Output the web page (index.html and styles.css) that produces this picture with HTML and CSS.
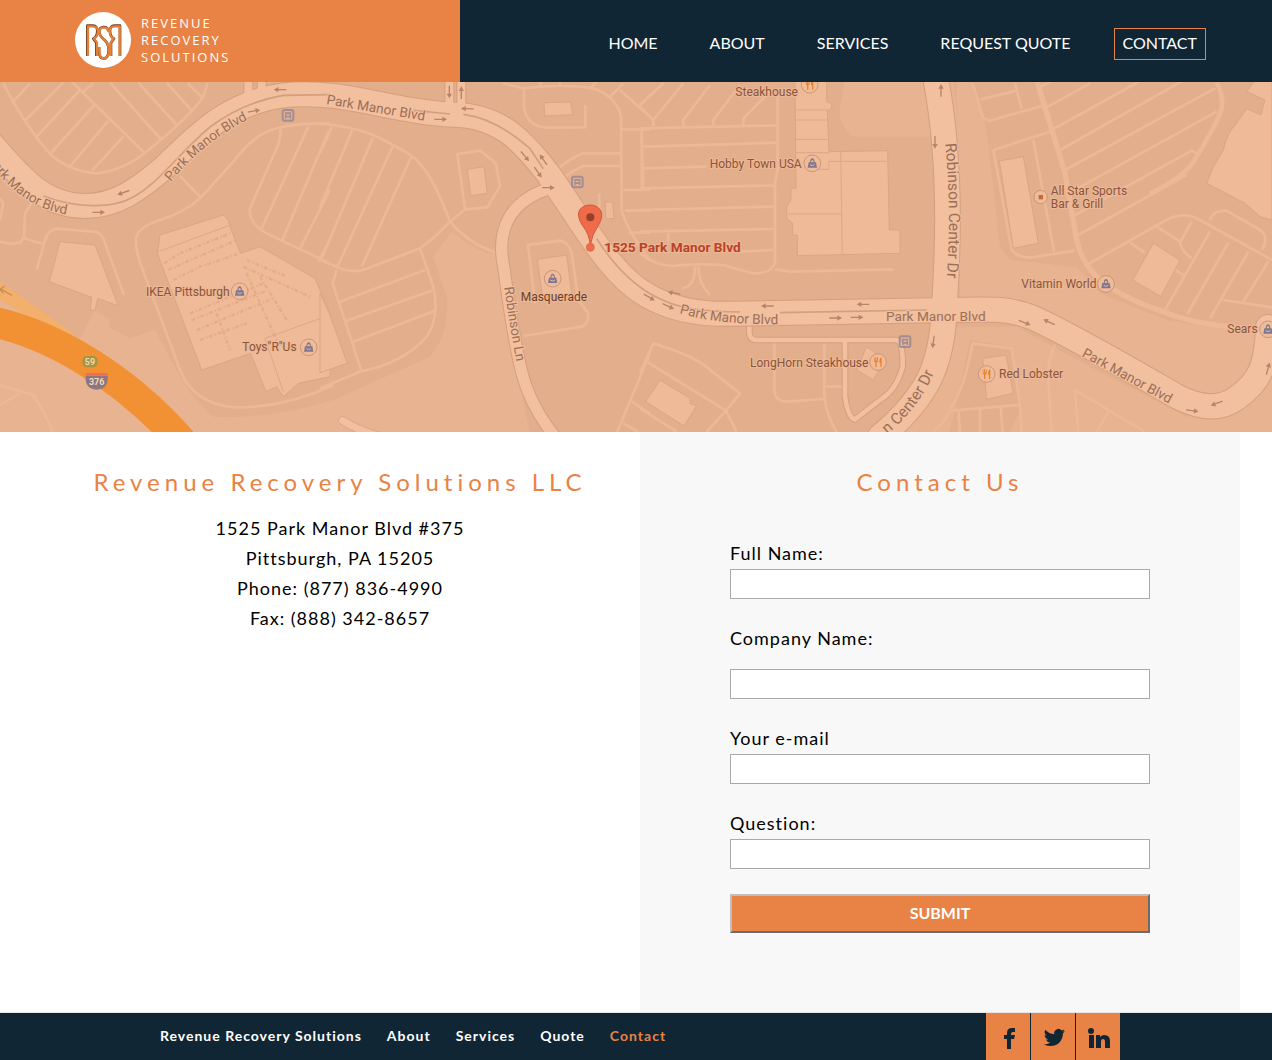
FILE: index.html
```html
<!DOCTYPE html>
<html lang="en">
<head>
<meta charset="utf-8">
<meta name="viewport" content="width=device-width, initial-scale=1">
<title>Contact | Revenue Recovery Solutions</title>
<link rel="stylesheet" href="styles.css">
</head>
<body>
<header class="site-header">
  <a class="brand" href="#">
    <svg class="brand-mark" viewBox="0 0 168 168" aria-hidden="true">
      <circle cx="84" cy="84" r="84" fill="#fff"/>
      <g fill="none" stroke="#6b4029" stroke-width="8" stroke-linejoin="round">
        <path d="M37 132V41H54Q67 42 67 57Q67 73 55 80L64 92V132"/>
        <path d="M135 132V41H118Q105 42 105 57Q105 73 117 80L108 92V132"/>
        <path d="M100 58Q100 45 86 45Q73 45 73 59Q73 71 86 82Q101 94 101 113Q101 139 86 139Q72 139 72 116V106"/>
      </g>
      <g fill="none" stroke="#e58038" stroke-width="7" stroke-linejoin="round">
        <path d="M39 132V43H54Q69 44 69 58Q69 74 57 80L66 92V132"/>
        <path d="M134 132V43H118Q104 44 104 58Q104 74 116 80L107 92V132"/>
        <path d="M101 59Q101 47 86 47Q73 47 73 60Q73 72 86 82Q102 94 102 113Q102 139 86 139Q73 139 73 116V106"/>
      </g>
    </svg>
    <span class="brand-name">REVENUE<br>RECOVERY<br>SOLUTIONS</span>
  </a>
  <nav class="main-nav" aria-label="Main">
    <a href="#">HOME</a>
    <a href="#">ABOUT</a>
    <a href="#">SERVICES</a>
    <a href="#">REQUEST QUOTE</a>
    <a class="current" href="#">CONTACT</a>
  </nav>
</header>

<svg class="map" viewBox="0 0 3816 1050" preserveAspectRatio="xMidYMid slice" role="img" aria-label="Map of 1525 Park Manor Blvd">
  <defs>
    <g id="shop"><circle class="poi" r="25"/><path d="M-14 13L-11-3H-7Q-6-15 0-15Q6-15 7-3H11L14 13ZM-4-3H4Q3-10 0-10Q-3-10-4-3Z" fill="#7f7791" fill-rule="evenodd"/><path d="M-7 4Q0 10 7 4" stroke="#edb895" stroke-width="3" fill="none"/></g>
    <g id="food"><circle class="poi" r="25"/><path d="M-12-14V-4Q-12 1-8 1V15H-4V1Q0 1 0-4V-14H-3V-4H-5V-14H-8V-4H-10V-14ZM11-15Q4-12 4-2V2H7V15H11Z" fill="#ee812c"/></g>
    <g id="bus"><rect x="-16" y="-16" width="32" height="32" rx="6" fill="none" stroke="#a38d94" stroke-width="6"/><path d="M-9 10V-9H9V10H5V6H-5V10ZM-5-4V1H5V-4Z" fill="#a38d94" fill-rule="evenodd"/></g>
    <path id="arrow" d="M-19-2H5V-8L19 0L5 8V2H-19Z"/>
    <path id="blvd-1" d="M-40 232C35 335 110 390 230 402"/>
    <path id="blvd-2" d="M512 300C585 215 655 155 760 105"/>
    <path id="blvd-3" d="M978 66L1320 124"/>
    <path id="blvd-4" d="M2038 694C2130 720 2230 730 2400 726"/>
    <path id="blvd-5" d="M3244 822L3560 994"/>
    <path id="ln" d="M1513 616C1524 700 1540 790 1560 900"/>
    <path id="dr-1" d="M2836 184C2850 340 2850 470 2837 640"/>
    <path id="dr-2" d="M2560 1130C2670 1060 2750 990 2802 872"/>
  </defs>
  <rect class="land" width="3816" height="1050"/>

  <g transform="translate(0 -6)">
    <g class="pale">
      <path d="M0 655L230 795L285 690L330 720L325 742L390 775L465 750L535 880L580 950L640 1010Q800 1020 1000 960L1290 830Q1350 760 1340 650L1300 530L1355 455Q1450 530 1490 520L1520 720L1590 1060H0Z"/>
      <path d="M2535 0H2860L2890 300V650H2900L2870 300L2860 170H2560Q2510 130 2520 80Z"/>
      <path d="M2870 0H2920L2960 150L3000 500L3030 540L3230 560L3300 640L3500 720L3780 760L3720 920L3600 985L3120 700L2880 650Z"/>
      <path d="M2870 740H3050L3250 850L3560 1010L3816 850V1060H2600L2800 930Z"/>
    </g>
    <g class="lot">
      <path d="M10 10Q70 130 150 222Q210 275 290 280Q370 270 435 218Q560 120 610 50L622 10M40 65L90 10M75 122L190 8M110 170L240 30M150 222L283 75M208 262L325 122M276 272L370 170M210 0L435 220M245 40L280 10M330 8L485 180M415 8L530 135M500 8L575 92M562 10L605 50"/>
      <path d="M0 355L10 370L0 420M0 485L35 492L60 488L72 472L75 400L95 370M72 475L130 492M110 570L135 480Q145 450 170 446L290 456Q310 465 315 490L372 645"/>
      <path d="M990 130Q850 128 790 160Q740 190 700 245L605 350Q560 395 480 420Q415 440 408 475Q405 510 425 560L540 870Q580 970 700 982Q850 985 1000 915M540 288L605 355M840 145Q845 180 825 215L750 385Q745 430 800 460L990 550M925 140L785 445M985 155L845 485M990 330L900 505M990 480L955 545"/>
      <path d="M0 975L60 940M0 915L100 945Q130 990 160 1060"/>
    </g>
    <g class="building">
      <path d="M180 485L285 495L355 678L293 655L285 692L270 688L275 652L148 605Z"/>
      <path d="M472 520L480 465L670 405L685 420L690 440L722 520L780 500L945 595L990 700V890L895 910L850 950L830 920L798 935L752 820L605 870Z"/>
    </g>
    <path class="texture" d="M492 550L540 520L690 460M505 570L560 545L710 480M520 600L600 560L720 520M570 700L790 610M575 720L800 632M590 750L820 655M600 780L740 730M740 540L860 590M730 560L930 650M650 700L690 810M740 580L830 780M780 590L860 720"/>
    <path class="ridge" d="M475 515L700 432M795 775L990 705M795 775L850 935"/>
    <path d="M0 605L220 760L235 797L0 660Z" fill="#f2b06c"/>
    <path d="M-20 726C150 762 370 885 545 1085" stroke="#f29133" stroke-width="92" fill="none"/>
    <g transform="translate(270 845)"><rect x="-23" y="-17" width="46" height="34" rx="14" fill="#a49544"/><text class="shield" x="0" y="9">59</text></g>
    <g transform="translate(290 905)"><path d="M-33-17H33Q36 22 0 24Q-36 22-33-17Z" fill="#8d7587"/><path d="M-33-25H33V-18H-33Z" fill="#ee6d48"/><text class="shield" x="0" y="9">376</text></g>
  </g>

  <g transform="translate(960 -6)">
    <g class="lot">
      <path d="M0 132Q120 140 190 180Q270 220 290 240Q340 290 390 425L345 470L300 505L130 570Q90 580 50 560L0 540M0 220L35 142M0 380L97 150M5 535L158 175M50 565L220 195M125 560L273 232M390 425Q450 495 530 518M390 425L435 388L502 382L540 318L527 250L482 212L412 222L435 388M300 505L340 620Q360 710 320 770Q250 850 120 875L0 925M50 570L38 610L125 875M60 665L315 570M80 722L335 632M100 785L345 692"/>
      <path d="M550 10L610 25Q730 10 820 25Q890 50 903 110L905 390Q920 450 990 540M612 30V80Q620 140 680 143L796 142V75M660 25L662 5M720 20V5M812 22L830 5M868 52L910 10M900 30L990 110M960 75L990 45M905 148H990M965 148V325M970 200H990M970 265H990M910 330H990M915 392H990M925 458H990M900 220H790Q750 235 710 270M900 258H790Q760 270 735 290M838 340V400M645 670L624 495L720 482Q755 490 758 540L775 660L805 700Q805 735 785 740L610 768"/>
      <path d="M990 820L890 1060M935 965L990 1000M910 1030L955 1055"/>
    </g>
    <g class="building"><path d="M442 268L492 260L502 340L452 347ZM672 68L752 66L758 104L674 108ZM855 366H878L882 415L858 417ZM652 538L740 525L755 640L668 652Z"/><path d="M0 640L28 700L82 850L0 878Z"/></g>
    <path class="casing" d="M68 1022Q120 1055 200 1075" stroke-width="26"/><path class="road" d="M68 1022Q120 1055 200 1075" stroke-width="22"/>
  </g>

  <g transform="translate(1920 -6)">
    <g class="lot">
      <path d="M0 80L40 120L130 10M0 75L70 10M40 120V138M210 15L130 120V138M300 15L220 120V135M390 35L310 115V135M0 145L410 136M5 148L10 320M10 200L415 188M10 265L200 260M0 325L405 316M0 390L400 380M0 455L400 447M85 460V485M300 515L400 510M413 40V270Q403 300 405 350V545Q400 580 340 580Q300 570 250 555Q150 550 100 558Q40 555 0 520M165 560Q165 620 125 625M175 560Q175 610 210 645M405 568L450 575L760 568"/>
      <path d="M0 880L40 790L100 810Q180 840 210 870L300 940L258 992L20 845M258 992L200 1056M258 992L290 1056M0 985L110 1055M403 785V930Q405 965 440 965L550 957M553 785V950Q560 1010 590 1056M560 920H610"/>
    </g>
    <g class="building">
      <path d="M465 0H560V65L575 70V85L562 92L567 215L743 212L748 450H780V520L472 527V465H458V430L440 415V380L453 360V325H468Z"/>
      <path d="M60 900L150 955V970L170 978L132 1038L17 965ZM680 800L735 840L700 900L650 870Z"/>
    </g>
    <path class="ridge" d="M465 90H562M465 120H560M467 178H563M467 218H567M602 215L607 523M443 402H605M567 244H740M567 244V268H520"/>
    <path class="casing" d="M328 725V760Q330 780 350 780H770Q790 790 788 860Q770 930 720 960L645 1018Q625 1015 615 950V785" stroke-width="20"/>
    <path class="road" d="M328 725V760Q330 780 350 780H770Q790 790 788 860Q770 930 720 960L645 1018Q625 1015 615 950V785" stroke-width="14"/>
  </g>

  <g transform="translate(2850 -6)">
    <path class="land" d="M270 0H966V700L830 740L640 700L500 640L400 560L340 300ZM115 170L300 130L390 500L350 560L230 540L180 510ZM60 780L185 800L215 980L180 1056H0Z"/>
    <g class="lot">
      <path d="M68 10L100 115L120 122L275 78M92 58L200 32M195 10L215 85M270 20L400 -40M290 82L420 10M305 150L630 -30M330 210L720 -10M345 270L795 25M365 335L800 95M375 405L725 212L740 220M385 465L710 285M130 210L300 155M130 210L185 510Q200 530 240 533L375 512M250 180L312 515"/>
      <path d="M410 555L640 425Q700 390 750 420L966 540M540 488L585 518M620 440L690 485Q690 510 725 535M725 425L692 485M780 455L645 690M835 488L712 702M895 515L780 715M955 545L880 665M820 660L966 682M660 560L700 585M780 420Q790 390 830 392L930 450Q960 470 935 510"/>
      <path d="M0 985Q40 940 68 790L185 805L210 980L215 1056M0 992L210 975M25 990L30 1056M90 985V1056M152 980L158 1056M315 795Q290 850 295 900L305 1056M385 1056L375 930L585 1056M475 995L440 1056M0 990Q-10 1020-50 1056"/>
      <path d="M260 0L345 280L380 480Q390 530 430 580Q500 650 640 695Q720 730 880 745" stroke-width="16"/>
      <path d="M800 5Q825 60 812 95Q800 130 740 230Q710 290 600 340" stroke-width="14"/>
    </g>
    <g class="building"><path d="M890 85L932 105L945 60L890 35L915 0H966V420L930 410L885 370L770 310L790 260L820 210Q830 160 860 130Z"/><path d="M148 243L220 230L265 490L190 505ZM610 490L690 540L675 570L632 650L548 600ZM98 835L168 825L190 940L110 958Z"/></g>
  </g>

  <!-- Park Manor Blvd, Robinson Ln and Robinson Center Dr: edges first, then surfaces -->
  <g class="casing">
    <path stroke-width="30" d="M1348 -20V80M1384 -20V80M745 -20V40M785 -20V30"/>
    <path stroke-width="80" d="M2805 -20C2845 180 2850 400 2835 640C2830 830 2800 930 2640 1065"/>
    <path stroke-width="40" d="M1640 322C1500 370 1495 480 1512 560C1528 680 1545 790 1565 870Q1590 970 1665 1065"/>
    <path stroke-width="78" d="M-30 180C60 285 130 372 255 372C350 372 420 320 500 250C610 140 700 60 850 40C1030 20 1180 92 1360 98C1500 100 1570 180 1640 270C1740 405 1830 590 1960 650Q2060 700 2200 695L2850 684C2970 680 3030 680 3090 704C3190 745 3420 880 3530 943Q3640 1000 3710 948C3780 900 3800 850 3804 735"/>
  </g>
  <g class="road">
    <path stroke-width="34" d="M1640 322C1500 370 1495 480 1512 560C1528 680 1545 790 1565 870Q1590 970 1665 1065"/>
    <path stroke-width="74" d="M2805 -20C2845 180 2850 400 2835 640C2830 830 2800 930 2640 1065"/>
    <path stroke-width="72" d="M-30 180C60 285 130 372 255 372C350 372 420 320 500 250C610 140 700 60 850 40C1030 20 1180 92 1360 98C1500 100 1570 180 1640 270C1740 405 1830 590 1960 650Q2060 700 2200 695L2850 684C2970 680 3030 680 3090 704C3190 745 3420 880 3530 943Q3640 1000 3710 948C3780 900 3800 850 3804 735"/>
    <path stroke-width="24" d="M1348 -20V80M1384 -20V80M745 -20V40M785 -20V30"/>
  </g>
  <path class="median" d="M130 342C230 380 340 380 400 345C480 300 530 220 630 135Q730 60 850 40L990 38M1240 85L1350 96M1390 97Q1490 110 1590 200L1630 260M1790 470Q1880 610 1990 655Q2060 690 2220 690M2340 692L2780 684"/>

  <g fill="#b88468">
    <use href="#arrow" x="296" y="391"/><use href="#arrow" transform="translate(370 332) rotate(160)"/><use href="#arrow" transform="translate(762 87) rotate(-10)"/><use href="#arrow" transform="translate(840 23) rotate(180)"/>
    <use href="#arrow" x="1322" y="112"/><use href="#arrow" transform="translate(1402 80) rotate(182)"/><use href="#arrow" transform="translate(1348 30) rotate(90)"/><use href="#arrow" transform="translate(1384 32) rotate(-90)"/><use href="#arrow" transform="translate(1575 223) rotate(50)"/><use href="#arrow" transform="translate(1614 271) rotate(55)"/><use href="#arrow" transform="translate(1630 233) rotate(235)"/><use href="#arrow" x="1645" y="317"/>
    <use href="#arrow" transform="translate(1948 646) rotate(30)"/><use href="#arrow" transform="translate(2005 673) rotate(25)"/><use href="#arrow" transform="translate(2022 633) rotate(190)"/><use href="#arrow" transform="translate(2302 672) rotate(180)"/><use href="#arrow" transform="translate(2589 667) rotate(180)"/><use href="#arrow" x="2507" y="708"/><use href="#arrow" x="2571" y="706"/>
    <use href="#arrow" transform="translate(2805 181) rotate(90)"/><use href="#arrow" transform="translate(2823 25) rotate(-90)"/><use href="#arrow" transform="translate(2800 780) rotate(98)"/><use href="#arrow" transform="translate(3074 722) rotate(22)"/><use href="#arrow" transform="translate(3147 720) rotate(205)"/><use href="#arrow" transform="translate(3577 986) rotate(8)"/><use href="#arrow" transform="translate(3650 964) rotate(160)"/><use href="#arrow" transform="translate(3804 860) rotate(-75)"/>
  </g>
  <path d="M0 620L36 640M0 622L14 612M0 622L10 634" stroke="#c98f58" stroke-width="4" fill="none"/>

  <g class="street">
    <text><textPath href="#blvd-1">Park Manor Blvd</textPath></text>
    <text><textPath href="#blvd-2">Park Manor Blvd</textPath></text>
    <text><textPath href="#blvd-3">Park Manor Blvd</textPath></text>
    <text><textPath href="#blvd-4">Park Manor Blvd</textPath></text>
    <text x="2658" y="716">Park Manor Blvd</text>
    <text><textPath href="#blvd-5">Park Manor Blvd</textPath></text>
    <text><textPath href="#ln">Robinson Ln</textPath></text>
    <text class="wide"><textPath href="#dr-1">Robinson Center Dr</textPath></text>
    <text class="wide end"><textPath href="#dr-2" startOffset="100%">n Center Dr</textPath></text>
  </g>

  <use href="#bus" x="864" y="100"/><use href="#bus" x="1732" y="300"/><use href="#bus" x="2715" y="779"/>
  <use href="#shop" x="719" y="628"/><use href="#shop" x="926" y="796"/><use href="#shop" x="1658" y="590"/><use href="#shop" x="2437" y="244"/><use href="#shop" x="3318" y="606"/><use href="#shop" x="3804" y="742"/>
  <use href="#food" x="2429" y="8"/><use href="#food" x="2634" y="840"/><use href="#food" x="2960" y="876"/>
  <circle class="poi" cx="3122" cy="345" r="20"/><rect x="3116" y="339" width="13" height="13" fill="#c56a37"/>

  <g class="place">
    <text x="438" y="641">IKEA Pittsburgh</text>
    <text x="727" y="807">Toys"R"Us</text>
    <text class="dark" x="1562" y="658">Masquerade</text>
    <text x="2206" y="42">Steakhouse</text>
    <text x="2129" y="258">Hobby Town USA</text>
    <text x="2250" y="855">LongHorn Steakhouse</text>
    <text x="3152" y="338">All Star Sports</text>
    <text x="3152" y="379">Bar &amp; Grill</text>
    <text x="3064" y="619">Vitamin World</text>
    <text x="3682" y="753">Sears</text>
    <text x="2997" y="889">Red Lobster</text>
  </g>
  <g>
    <path d="M1771 490Q1768 455 1747 430Q1728 400 1740 382Q1752 369 1771 369Q1790 369 1801 384Q1812 402 1795 430Q1775 458 1771 490Z" fill="#ef6b49" stroke="#cb5a3b" stroke-width="3"/>
    <circle cx="1771" cy="406" r="12" fill="#94412b"/>
    <circle cx="1771" cy="496" r="12" fill="#ef6b49" stroke="#d9603f" stroke-width="2"/>
    <text class="pin-label" x="1813" y="510">1525 Park Manor Blvd</text>
  </g>
</svg>

<main class="content">
  <section class="address">
    <h1 class="title">Revenue Recovery Solutions LLC</h1>
    <address>1525 Park Manor Blvd #375<br>Pittsburgh, PA 15205<br>Phone: (877) 836-4990<br>Fax: (888) 342-8657</address>
  </section>
  <section class="panel">
    <h2 class="title">Contact Us</h2>
    <form class="contact-form">
      <div class="field"><label for="full-name">Full Name:</label><input id="full-name" type="text"></div>
      <div class="field field-spaced"><label for="company">Company Name:</label><input id="company" type="text"></div>
      <div class="field"><label for="email">Your e-mail</label><input id="email" type="email"></div>
      <div class="field"><label for="question">Question:</label><input id="question" type="text"></div>
      <button class="submit" type="submit">SUBMIT</button>
    </form>
  </section>
</main>

<footer class="site-footer">
  <nav class="footer-nav" aria-label="Footer">
    <a href="#">Revenue Recovery Solutions</a>
    <a href="#">About</a>
    <a href="#">Services</a>
    <a href="#">Quote</a>
    <a class="current" href="#">Contact</a>
  </nav>
  <div class="social">
    <a href="#" aria-label="Facebook"><svg viewBox="0 0 24 24"><path d="M10 23V13H7V9H10V7Q10 2 15 2H18V6H16Q14 6 14 8V9H18L17 13H14V23Z"/></svg></a>
    <a href="#" aria-label="Twitter"><svg viewBox="0 0 24 24"><path d="M23 5.1a8.600 8.600 0 0 1-2.500.7 4.300 4.300 0 0 0 1.900-2.400 8.600 8.600 0 0 1-2.700 1A4.300 4.300 0 0 0 12.300 8.300 12.200 12.200 0 0 1 3.400 3.800a4.300 4.300 0 0 0 1.300 5.800 4.300 4.300 0 0 1-2-.5 4.300 4.300 0 0 0 3.500 4.200 4.300 4.300 0 0 1-2 .1 4.300 4.300 0 0 0 4 3A8.700 8.700 0 0 1 2 18.200a12.200 12.200 0 0 0 6.600 1.900c8 0 12.600-6.800 12.300-12.900A8.800 8.800 0 0 0 23 5.100Z"/></svg></a>
    <a href="#" aria-label="LinkedIn"><svg viewBox="0 0 24 24"><circle cx="4" cy="5" r="3"/><path d="M2 9H7V22H2ZM9 9H13V11Q15 9 17 9Q23 9 23 15V22H18V16Q18 13 16 13Q14 13 14 16V22H9Z"/></svg></a>
  </div>
</footer>
</body>
</html>
```
FILE: styles.css
```css
* { box-sizing: border-box; }

body {
  margin: 0;
  min-height: 100vh;
  display: flex;
  flex-direction: column;
  background: #fff;
  color: #000;
  font-family: Lato, "Liberation Sans", sans-serif;
}

a { color: inherit; text-decoration: none; }

.site-header {
  display: flex;
  min-height: 82px;
  background: #112634;
  color: #fff;
}

.brand {
  flex: 0 0 460px;
  display: flex;
  align-items: center;
  gap: 10px;
  padding: 12px 0 14px 75px;
  background: #e88345;
}

.brand-mark { width: 56px; height: 56px; }

.brand-name {
  font: 13px/17px "Open Sans", "Noto Sans", sans-serif;
  letter-spacing: 2px;
}

.main-nav {
  flex: 1;
  display: flex;
  align-items: center;
  justify-content: flex-end;
  gap: 34px;
  padding: 6px 66px 0 0;
}

.main-nav a {
  padding: 0 8px 2px;
  border: 1px solid transparent;
  font-size: 16px;
  line-height: 28px;
  white-space: nowrap;
}

.main-nav .current { border-color: #e88345; }

.map { display: block; width: 100%; height: 350px; font-family: Roboto, sans-serif; }
.land { fill: #e3ae8c; }
.pale { fill: #e8b391; }
.lot { fill: none; stroke: #edb895; stroke-width: 8; stroke-linejoin: round; }
.building { fill: #efba97; stroke: #dca583; stroke-width: 3; }
.ridge { fill: none; stroke: #dca888; stroke-width: 3; }
.texture { fill: none; stroke: #e4ac88; stroke-width: 7; stroke-dasharray: 12 7 4 5; }
.casing { fill: none; stroke: #d49f7d; stroke-linecap: round; }
.road { fill: none; stroke: #f2bf9f; stroke-linecap: round; }
.median { fill: none; stroke: #d49f7d; stroke-width: 5; }
.poi { fill: #efbb99; stroke: #cb9678; stroke-width: 3; }
.street { fill: #9b7057; font-size: 41px; stroke: #f2bf9f; stroke-width: 6; paint-order: stroke; }
.street .wide { font-size: 47px; }
.street .end { text-anchor: end; }
.place { fill: #8a543c; font-size: 36px; stroke: #edb895; stroke-width: 6; paint-order: stroke; }
.place .dark { fill: #6b3c2a; }
.pin-label { fill: #b9412a; font-size: 41px; font-weight: 700; stroke: #edb895; stroke-width: 6; paint-order: stroke; }
.shield { fill: #f3d8ae; font-size: 27px; font-weight: 700; text-anchor: middle; }

.content {
  flex: 1;
  display: grid;
  grid-template-columns: 1fr 1fr;
  margin: 0 32px 0 40px;
}

.address { padding-top: 35px; text-align: center; }

.title {
  margin: 0;
  color: #e88345;
  font-size: 24px;
  font-weight: 400;
  line-height: 30px;
  letter-spacing: 5px;
  text-align: center;
}

.address address {
  margin-top: 16px;
  font-size: 18px;
  font-style: normal;
  line-height: 30px;
  letter-spacing: 1px;
}

.panel { padding: 35px 90px 79px; background: #f8f8f8; }

.contact-form {
  display: flex;
  flex-direction: column;
  gap: 25px;
  margin-top: 42px;
}

.field { display: flex; flex-direction: column; }
.field-spaced { gap: 15px; }

.field label {
  padding-bottom: 2px;
  font-size: 18px;
  line-height: 28px;
  letter-spacing: 1px;
}

.field input {
  width: 100%;
  height: 30px;
  padding: 0 8px;
  border: 1px solid #aaa;
  border-radius: 0;
  background: #fff;
  font: inherit;
}

.submit {
  height: 39px;
  padding: 0 0 2px;
  border: 2px solid;
  border-color: #bfbfbf #6b6b6b #6b6b6b #bfbfbf;
  border-radius: 0;
  background: #e88345;
  color: #fff;
  font-family: inherit;
  font-size: 16px;
  font-weight: 700;
}

.site-footer {
  display: flex;
  align-items: stretch;
  justify-content: space-between;
  min-height: 48px;
  padding: 0 152px 0 160px;
  border-top: 1px solid #e6e6e6;
  background: #112634;
  color: #fff;
}

.footer-nav {
  display: flex;
  align-items: center;
  gap: 25px;
  padding-bottom: 2px;
  font-size: 14px;
  font-weight: 700;
  letter-spacing: 1px;
  white-space: nowrap;
}

.footer-nav .current { color: #e88345; }

.social { display: flex; gap: 1px; }

.social a {
  display: flex;
  align-items: center;
  justify-content: center;
  width: 44px;
  padding: 2px 0 0 2px;
  background: #e88345;
}

.social svg { width: 24px; height: 24px; fill: #112634; }
```
